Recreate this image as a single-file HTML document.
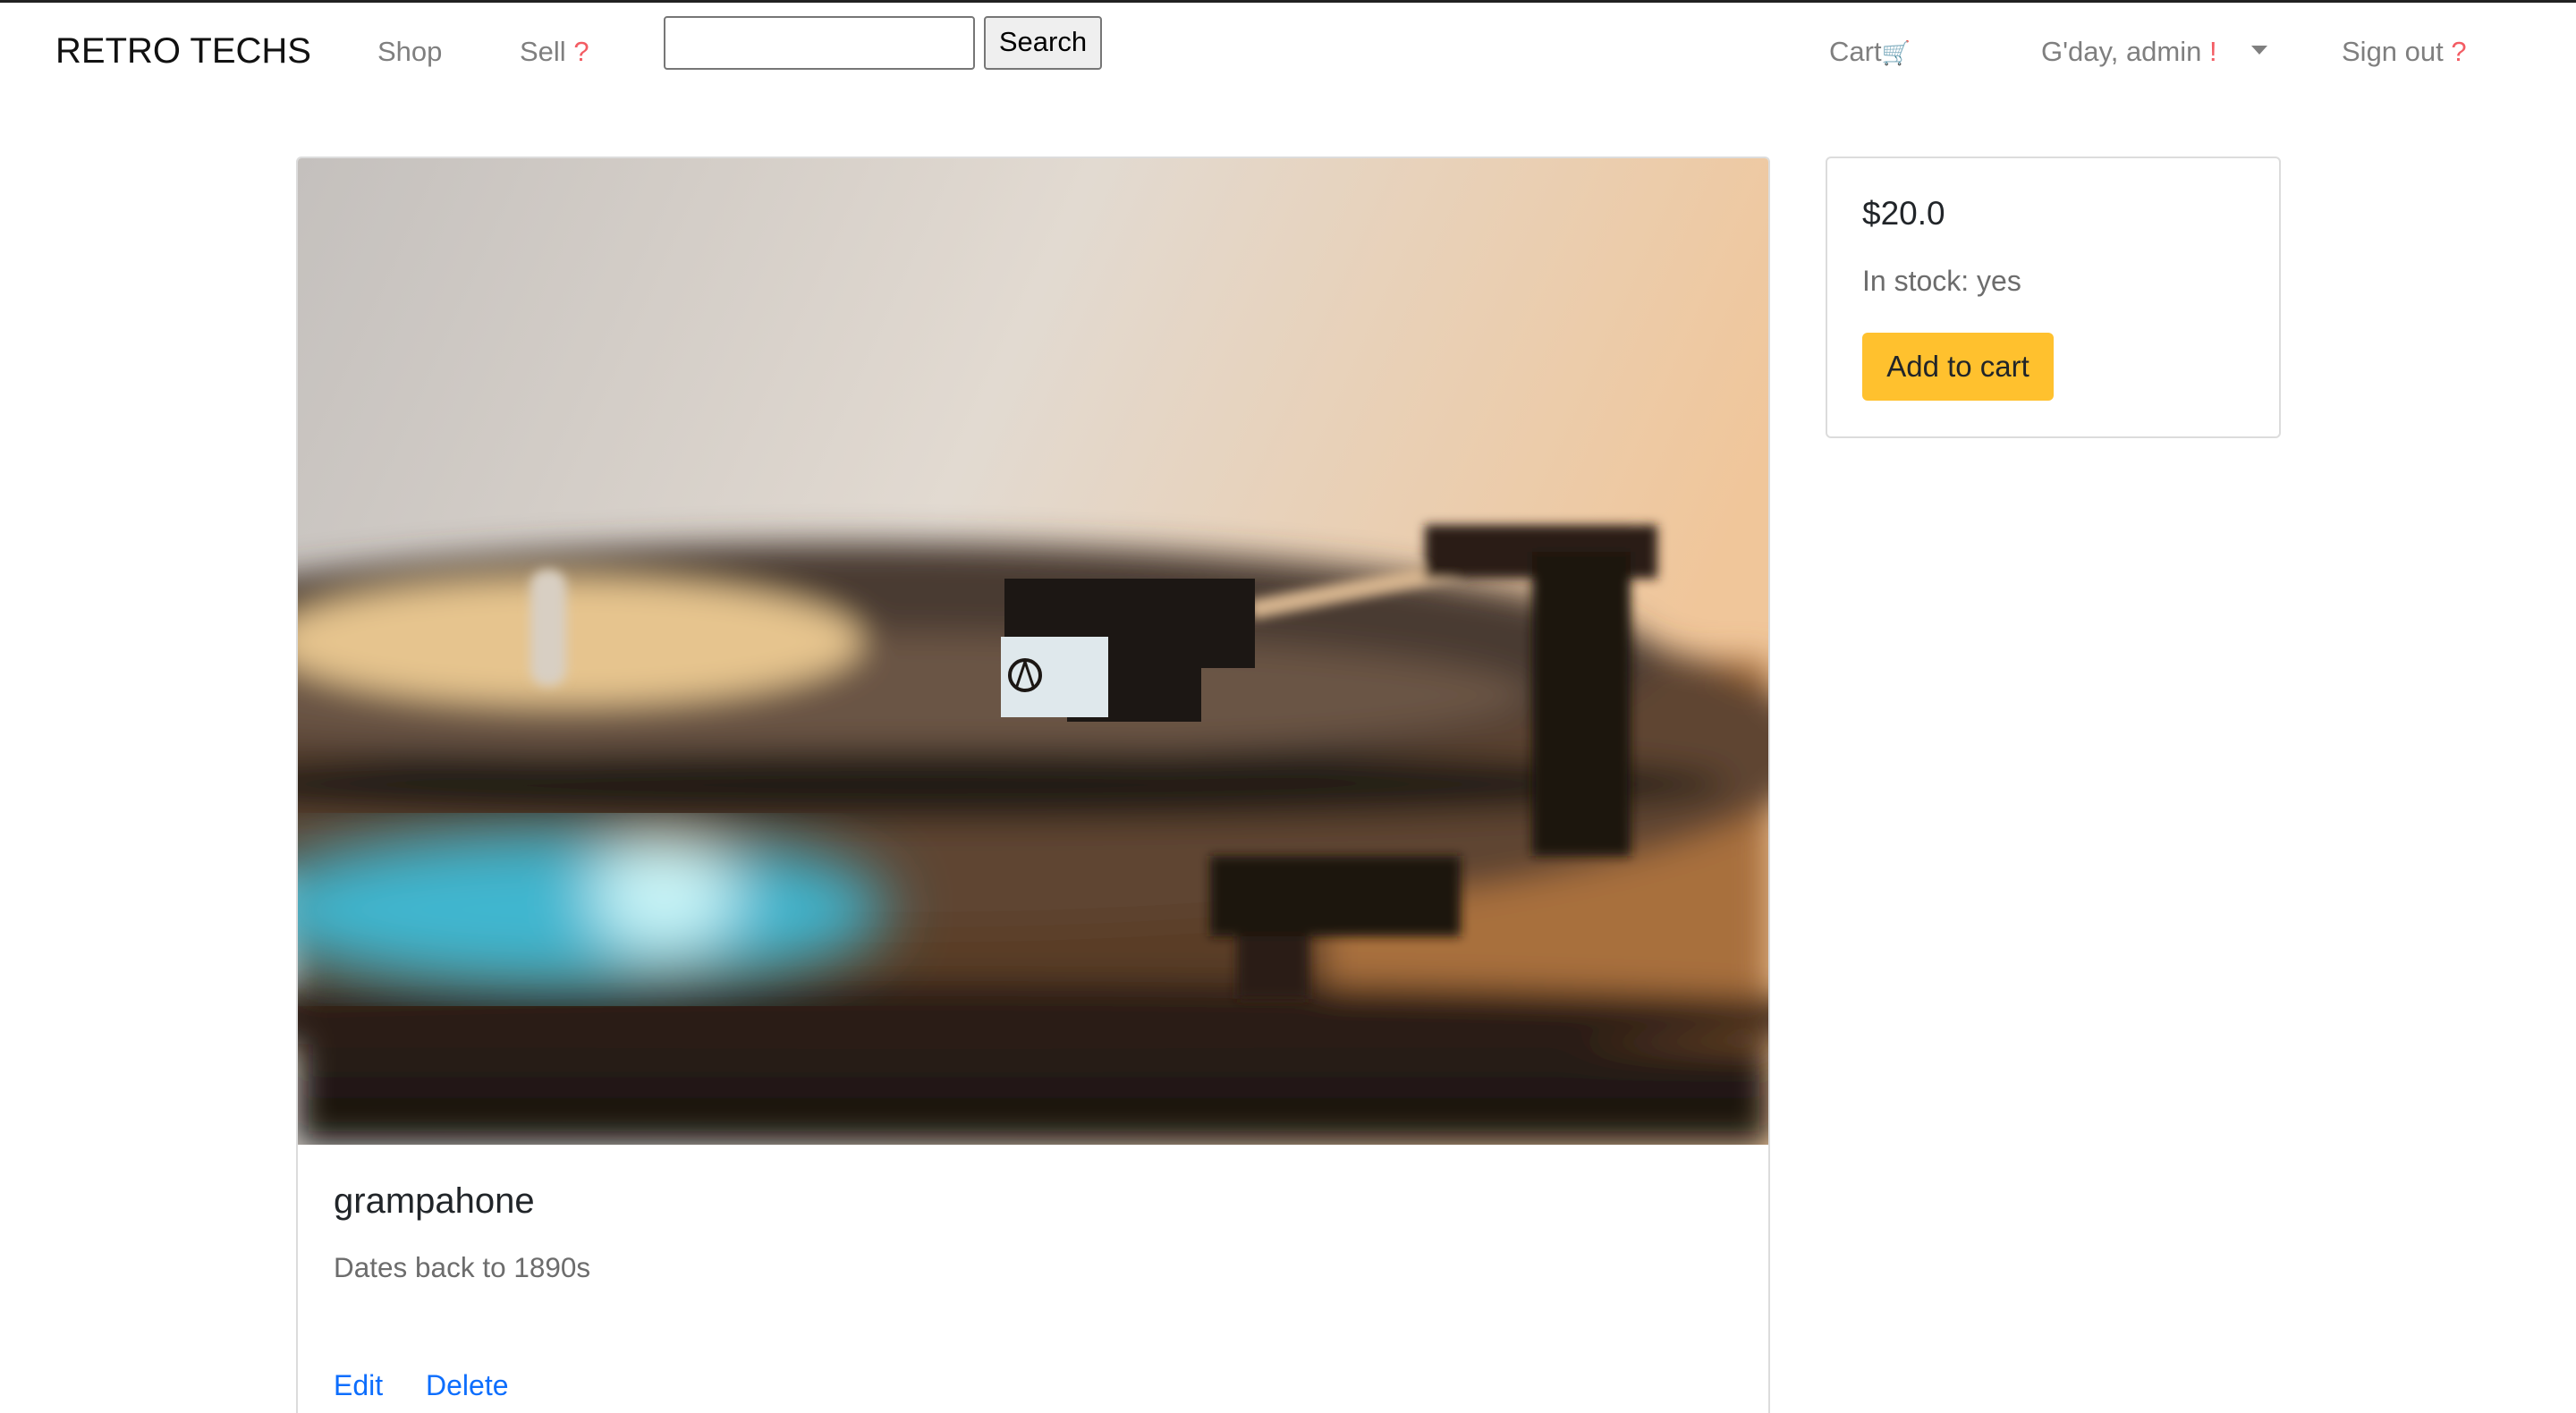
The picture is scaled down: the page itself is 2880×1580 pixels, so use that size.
<!DOCTYPE html>
<html><head><meta charset="utf-8"><style>
*{box-sizing:border-box;margin:0;padding:0}
html,body{width:2880px;height:1580px;overflow:hidden}
body{background:#fff;font-family:"Liberation Sans",Arial,sans-serif;position:relative}
.a{position:absolute;white-space:nowrap}
.nav{color:#7f7f7f;font-size:31px}
.q{color:#f35c63}
</style></head><body>
<div class="a" style="left:0;top:0;width:2880px;height:3px;background:#222"></div>
<div class="a" style="left:62px;top:35px;font-size:40px;color:#111">RETRO TECHS</div>
<div class="a nav" style="left:422px;top:40px">Shop</div>
<div class="a nav" style="left:581px;top:40px">Sell <span class="q">?</span></div>
<div class="a" style="left:742px;top:18px;width:348px;height:60px;border:2px solid #767676;border-radius:4px"></div>
<div class="a" style="left:1100px;top:18px;width:132px;height:60px;border:2px solid #767676;border-radius:4px;background:#efefef;font-size:31px;text-align:center;line-height:54px;color:#000">Search</div>
<div class="a nav" style="left:2045px;top:40px">Cart<span style="font-size:26px;color:#999">🛒</span></div>
<div class="a nav" style="left:2282px;top:40px">G'day, admin <span class="q">!</span></div>
<div class="a" style="left:2517px;top:51px;width:0;height:0;border-left:9px solid transparent;border-right:9px solid transparent;border-top:10px solid #7f7f7f"></div>
<div class="a nav" style="left:2618px;top:40px">Sign out <span class="q">?</span></div>

<div class="a" style="left:2041px;top:175px;width:509px;height:315px;border:2px solid #dcdcdc;border-radius:6px"></div>
<div class="a" style="left:2082px;top:218px;font-size:37px;color:#212529">$20.0</div>
<div class="a" style="left:2082px;top:296px;font-size:32px;color:#6c6c6c">In stock: yes</div>
<div class="a" style="left:2082px;top:372px;width:214px;height:76px;background:#ffc12e;border-radius:6px;font-size:33px;color:#212529;text-align:center;line-height:76px">Add to cart</div>

<div class="a" style="left:331px;top:175px;width:1648px;height:1420px;border:2px solid #dcdcdc;border-bottom:none;border-radius:6px 6px 0 0;overflow:hidden">
<svg width="1646" height="1103" viewBox="0 0 1646 1103" style="display:block">
<defs>
<linearGradient id="bg" x1="0" y1="0" x2="1" y2="0.3"><stop offset="0" stop-color="#c4c0bd"/><stop offset="0.5" stop-color="#e2dad1"/><stop offset="1" stop-color="#f0c69a"/></linearGradient>
<linearGradient id="bot" x1="0" y1="0" x2="0" y2="1"><stop offset="0" stop-color="#2a1e16"/><stop offset="1" stop-color="#16110e"/></linearGradient>
<filter id="b1"><feGaussianBlur stdDeviation="18"/></filter>
<filter id="b2"><feGaussianBlur stdDeviation="6"/></filter>
<filter id="b3"><feGaussianBlur stdDeviation="35"/></filter>
</defs>
<rect width="1646" height="1103" fill="url(#bg)"/>
<g filter="url(#b1)">
<rect x="0" y="700" width="1646" height="403" fill="#5a3e28"/>
<rect x="1150" y="560" width="496" height="460" fill="#a8703d"/>
<ellipse cx="680" cy="660" rx="1020" ry="200" fill="#5e4432"/>
<ellipse cx="620" cy="560" rx="900" ry="130" fill="#4a3a30"/>
<ellipse cx="600" cy="600" rx="780" ry="70" fill="#6b5444"/>
<ellipse cx="700" cy="700" rx="900" ry="40" fill="#241a14"/>
<ellipse cx="300" cy="540" rx="330" ry="70" fill="#e6c48e"/>
<rect x="0" y="990" width="1646" height="113" fill="url(#bot)"/>
<ellipse cx="700" cy="960" rx="1100" ry="40" fill="#2a1e16"/>
</g>
<g filter="url(#b3)"><ellipse cx="300" cy="840" rx="360" ry="90" fill="#3fb6cf"/><ellipse cx="410" cy="820" rx="80" ry="70" fill="#c9f4f7"/></g>
<g filter="url(#b2)">
<rect x="260" y="460" width="40" height="130" rx="18" fill="#d8cfc3"/>
<line x1="1065" y1="505" x2="1500" y2="420" stroke="#d5b48e" stroke-width="22"/>
<rect x="1260" y="410" width="260" height="60" fill="#2a1c14"/>
<rect x="1380" y="440" width="110" height="340" fill="#1e1510"/>
<rect x="1020" y="780" width="280" height="90" fill="#1e1510"/>
<rect x="1050" y="870" width="80" height="70" fill="#2a1c14"/>
</g>
<rect x="790" y="470" width="280" height="100" fill="#1c1714"/>
<rect x="860" y="520" width="150" height="110" fill="#1c1714"/>
<rect x="786" y="535" width="120" height="90" fill="#dfe8ec"/>
<circle cx="813" cy="578" r="17" fill="none" stroke="#1c1714" stroke-width="4"/>
<path d="M813 563 L803 593 M813 563 L823 593" stroke="#1c1714" stroke-width="3"/>
</svg>
<div class="a" style="left:40px;top:1144px;font-size:40px;color:#212529">grampahone</div>
<div class="a" style="left:40px;top:1222px;font-size:31.5px;color:#6c6c6c">Dates back to 1890s</div>
<div class="a" style="left:40px;top:1354px;font-size:32px;color:#0d6efd">Edit</div>
<div class="a" style="left:143px;top:1354px;font-size:32px;color:#0d6efd">Delete</div>
</div>
</body></html>
